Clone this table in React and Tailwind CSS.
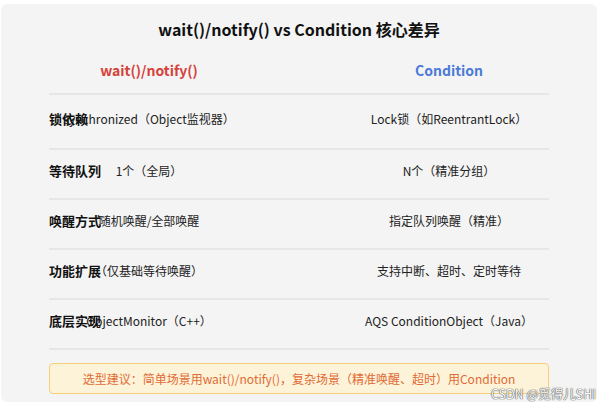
import React from 'react';

const rows = [
  { label: '锁依赖', left: 'synchronized（Object监视器）', right: 'Lock锁（如ReentrantLock）', h: 'h-[55px]' },
  { label: '等待队列', left: '1个（全局）', right: 'N个（精准分组）', h: 'h-[50px]' },
  { label: '唤醒方式', left: '随机唤醒/全部唤醒', right: '指定队列唤醒（精准）', h: 'h-[50px]' },
  { label: '功能扩展', left: '（仅基础等待唤醒）', right: '支持中断、超时、定时等待', h: 'h-[50px]' },
  { label: '底层实现', left: 'ObjectMonitor（C++）', right: 'AQS ConditionObject（Java）', h: 'h-[50px]' },
];

const App = () => {
  return (
    <div className="w-[602px] h-[404px] bg-white pt-[4px] pl-[1px] font-['Noto_Sans_CJK_SC',sans-serif]">
      <div className="relative w-[596px] h-[398px] bg-[#f4f4f4] rounded-[6px] px-[48px]">
        {/* Title */}
        <div className="h-[53px] pt-[14px] text-center text-[16px] font-bold text-[#111] leading-[22px]">
          wait()/notify() vs Condition 核心差异
        </div>

        {/* Column headers */}
        <div className="grid grid-cols-[200px_100px_200px] h-[38px] pt-[3px] items-start text-[14px] font-bold leading-[20px] border-b-2 border-[#e6e6e6]">
          <div className="text-center text-[#d4423b]">wait()/notify()</div>
          <div />
          <div className="text-center text-[#4a7bd8]">Condition</div>
        </div>

        {/* Rows */}
        {rows.map((r) => (
          <div
            key={r.label}
            className={`grid grid-cols-[200px_100px_200px] ${r.h} items-center text-[12px] leading-[18px] text-[#222] border-b-2 border-[#e6e6e6] pb-[6px]`}
          >
            <div className="grid">
              <span className="col-start-1 row-start-1 justify-self-center">{r.left}</span>
              <span className="col-start-1 row-start-1 justify-self-start text-[13px] font-bold text-[#111]">
                {r.label}
              </span>
            </div>
            <div />
            <div className="text-center">{r.right}</div>
          </div>
        ))}

        {/* Recommendation banner */}
        <div className="mt-[13px] h-[31px] flex items-center justify-center rounded-[4px] bg-[#fdf3d8] border border-[#f6cf78] text-[12px] text-[#e06a35]">
          选型建议：简单场景用wait()/notify()，复杂场景（精准唤醒、超时）用Condition
        </div>

        {/* Watermark */}
        <div className="absolute right-[1px] bottom-[1px] text-[12.5px] leading-[15px] text-white [text-shadow:0_0_1px_#555,0_0_1px_#555,0_0_1px_#777]">
          CSDN @觅得儿SHI
        </div>
      </div>
    </div>
  );
};

export default App;
